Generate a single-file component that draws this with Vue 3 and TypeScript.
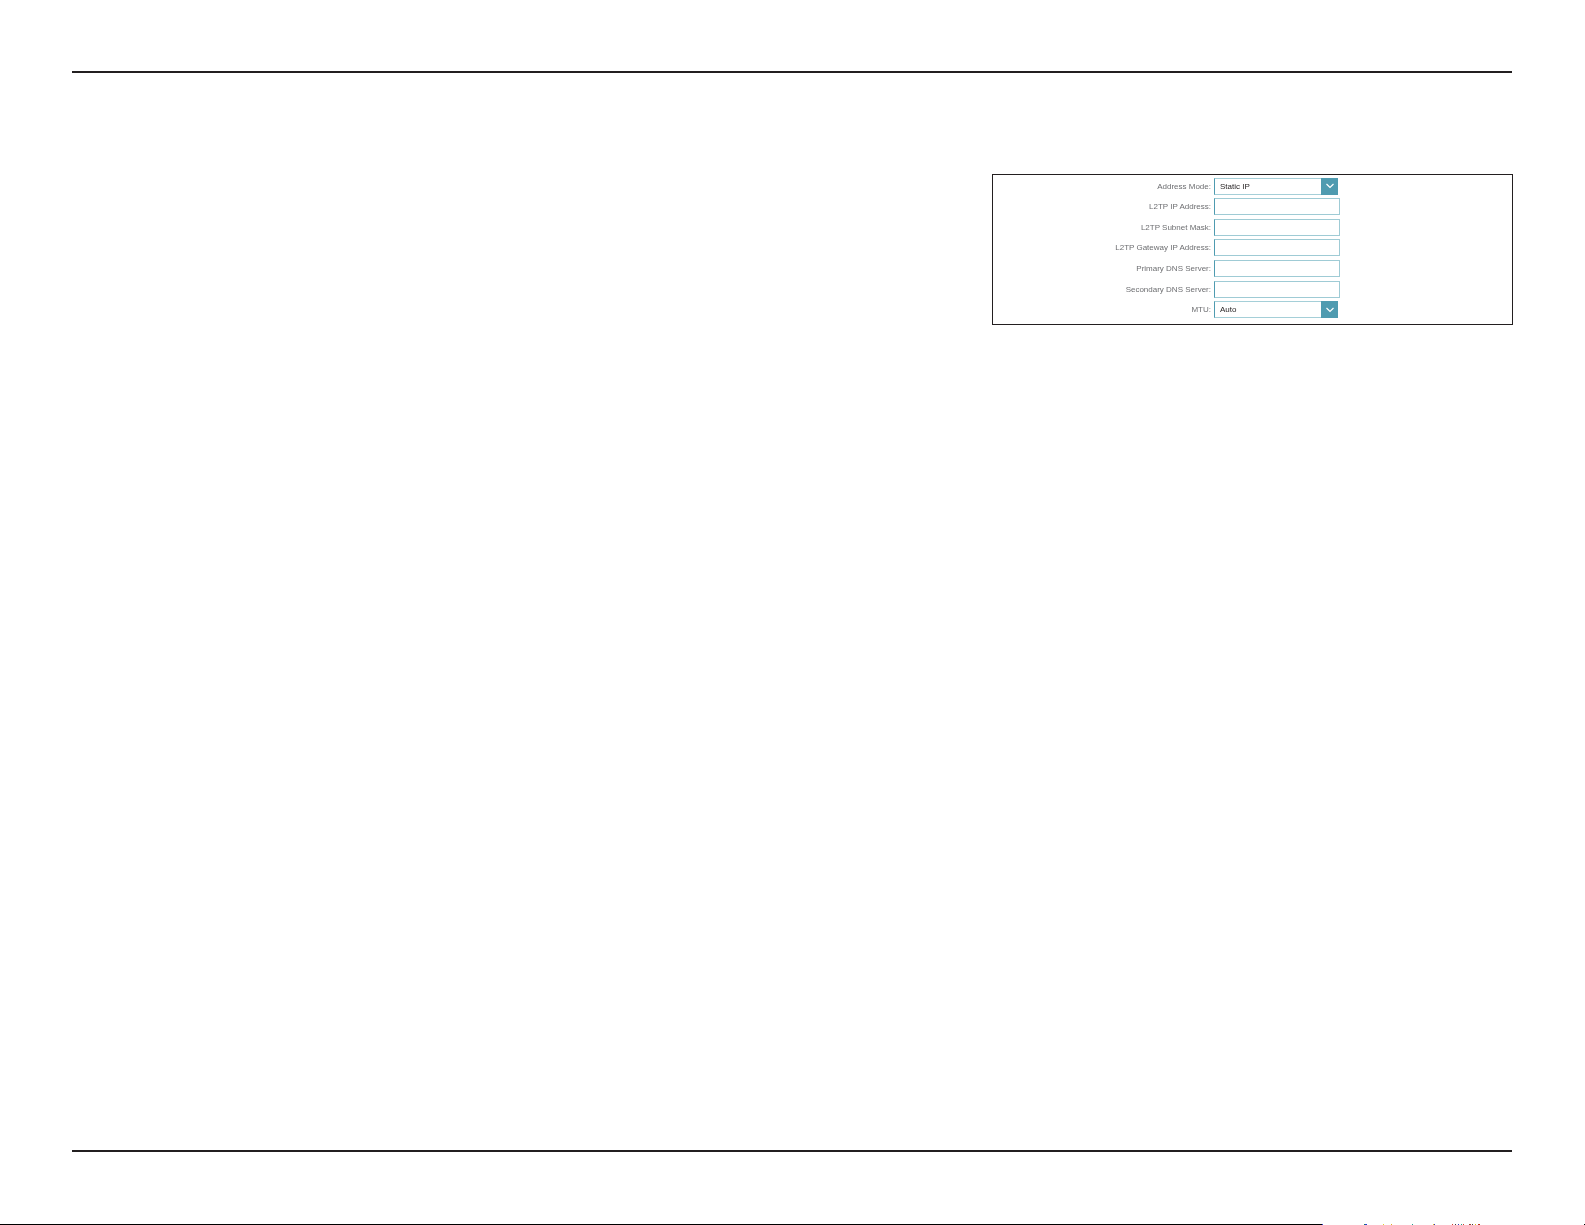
<script setup lang="ts">
interface Row {
  label: string
  kind: 'select' | 'input'
  value?: string
}
interface Speck {
  x: number
  w: number
  color: string
}
const rows: Row[] = [
  { label: 'Address Mode:', kind: 'select', value: 'Static IP' },
  { label: 'L2TP IP Address:', kind: 'input' },
  { label: 'L2TP Subnet Mask:', kind: 'input' },
  { label: 'L2TP Gateway IP Address:', kind: 'input' },
  { label: 'Primary DNS Server:', kind: 'input' },
  { label: 'Secondary DNS Server:', kind: 'input' },
  { label: 'MTU:', kind: 'select', value: 'Auto' },
]
const specks: Speck[] = [
  { x: 1322, w: 1, color: '#2a3fd0' },
  { x: 1364, w: 1, color: '#1a8a5a' },
  { x: 1365, w: 2, color: '#2a3fd0' },
  { x: 1383, w: 1, color: '#e0d030' },
  { x: 1391, w: 1, color: '#e0b020' },
  { x: 1412, w: 1, color: '#20a090' },
  { x: 1433, w: 1, color: '#e0c020' },
  { x: 1434, w: 1, color: '#3040c0' },
  { x: 1452, w: 1, color: '#d04030' },
  { x: 1455, w: 1, color: '#404040' },
  { x: 1458, w: 1, color: '#3040c0' },
  { x: 1461, w: 1, color: '#20a090' },
  { x: 1463, w: 1, color: '#d04030' },
  { x: 1469, w: 2, color: '#a04030' },
  { x: 1472, w: 1, color: '#404040' },
  { x: 1475, w: 1, color: '#e0c020' },
  { x: 1478, w: 2, color: '#c03020' },
  { x: 1584, w: 1, color: '#000000' },
]
</script>

<template>
  <div class="page">
    <div class="rule rule-top"></div>
    <div class="box-line">
      <section class="box">
        <div v-for="row in rows" :key="row.label" class="row">
          <span class="label">{{ row.label }}</span>
          <div v-if="row.kind === 'select'" class="select">
            <span class="value">{{ row.value }}</span>
            <span class="arrow">
              <svg width="10" height="6" viewBox="0 0 10 6">
                <path d="M1.5 1 L5 4.5 L8.5 1" fill="none" stroke="#fff" stroke-width="1.2" />
              </svg>
            </span>
          </div>
          <div v-else class="field"></div>
        </div>
      </section>
    </div>
    <div class="spacer"></div>
    <div class="rule rule-bottom"></div>
    <div class="edge">
      <div class="edge-line"></div>
      <i
        v-for="s in specks"
        :key="s.x"
        class="speck"
        :style="{ left: s.x + 'px', width: s.w + 'px', background: s.color }"
      ></i>
    </div>
  </div>
</template>

<style>
html,
body {
  margin: 0;
  background: #fff;
}
</style>

<style scoped>
.page {
  width: 1585px;
  height: 1225px;
  display: flex;
  flex-direction: column;
  padding-top: 71px;
  box-sizing: border-box;
  background: #fff;
  font-family: "Liberation Sans", Arial, sans-serif;
  overflow: hidden;
}
.rule {
  height: 2px;
  margin-left: 72px;
  width: 1440px;
  background: #231f20;
  flex: none;
}
.box-line {
  margin-top: 101px;
  padding-left: 992px;
  flex: none;
}
.box {
  width: 521px;
  height: 151px;
  box-sizing: border-box;
  border: 1px solid #231f20;
  padding-top: 1.02px;
  display: flex;
  flex-direction: column;
}
.row {
  display: flex;
  align-items: center;
  height: 20.56px;
  flex: none;
  filter: blur(0.3px);
}
.label {
  width: 218px;
  text-align: right;
  font-size: 8px;
  line-height: 17px;
  color: #6d6e71;
  flex: none;
  white-space: nowrap;
}
.select,
.field {
  margin-left: 3px;
  box-sizing: border-box;
  flex: none;
  height: 17px;
}
.select {
  width: 124px;
  display: flex;
  align-items: stretch;
  border-left: 1px solid #4f9bb0;
  border-top: 1px solid #a5cfd8;
  border-bottom: 1px solid #a5cfd8;
}
.value {
  flex: 1;
  padding-left: 5px;
  font-size: 8px;
  line-height: 15px;
  color: #231f20;
}
.arrow {
  width: 17px;
  margin: -1px 0;
  background: #4f9bb0;
  display: flex;
  align-items: center;
  justify-content: center;
}
.field {
  width: 126px;
  border: 1px solid #9fcbd5;
  border-left-color: #4f9bb0;
}
.spacer {
  flex: 1;
}
.rule-bottom {
  margin-bottom: 72px;
}
.edge {
  height: 1px;
  flex: none;
  position: relative;
}
.edge-line {
  height: 1px;
  width: 1322px;
  background: #000;
}
.speck {
  position: absolute;
  top: 0;
  height: 1px;
}
</style>
